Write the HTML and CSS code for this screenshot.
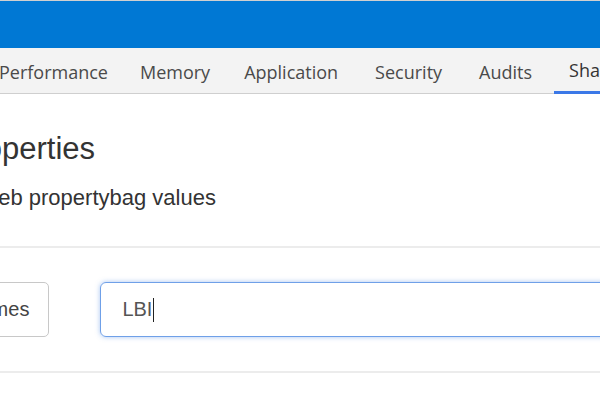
FILE: index.html
```html
<!DOCTYPE html>
<html>
<head>
<meta charset="utf-8">
<link rel="stylesheet" href="styles.css">
</head>
<body>
<div class="titlebar"></div>
<nav class="tabs">
  <div class="tab">Performance</div>
  <div class="tab">Memory</div>
  <div class="tab">Application</div>
  <div class="tab">Security</div>
  <div class="tab">Audits</div>
  <div class="tab active">SharePoint</div>
</nav>
<main class="content">
  <h1 class="title">Web Properties</h1>
  <p class="subtitle">Manage the web propertybag values</p>
  <hr class="divider">
  <div class="search-row">
    <button class="btn">Get all names</button>
    <div class="field"><span class="value">LBI</span><span class="caret"></span></div>
  </div>
  <hr class="divider">
</main>
</body>
</html>
```
FILE: styles.css
```css
html, body {
  margin: 0;
  padding: 0;
  background: #ffffff;
  overflow: hidden;
  width: 600px;
  height: 400px;
}
.titlebar {
  height: 48px;
  box-sizing: border-box;
  background: #0078d4;
  border-top: 1px solid #d0d0d0;
}
.tabs {
  display: flex;
  height: 46px;
  box-sizing: border-box;
  background: #f3f3f3;
  border-bottom: 1px solid #cfcfcf;
  margin-left: -18px;
  width: 700px;
  font-family: "Open Sans", sans-serif;
  font-size: 18px;
  color: #4a4a4a;
}
.tab {
  padding: 0 17px;
  display: flex;
  align-items: center;
  white-space: nowrap;
  box-sizing: border-box;
  height: 46px;
  padding-top: 1px;
}
.tab:nth-child(2) { margin-left: -2px; }
.tab:nth-child(4) { margin-left: 3px; }
.tab:nth-child(5) { margin-left: 3px; }
.tab.active {
  color: #333333;
  border-bottom: 3px solid #3b78e7;
  margin-left: 5px;
  margin-bottom: -1px;
  padding-left: 15px;
}
.content {
  margin-left: -118px;
  font-family: "Liberation Sans", Arial, sans-serif;
  color: #333333;
  width: 900px;
}
.title {
  margin: 37px 0 0 0;
  font-size: 31px;
  line-height: 36px;
  font-weight: normal;
}
.subtitle {
  margin: 17px 0 0 -22px;
  font-size: 22px;
  line-height: 28px;
}
.divider {
  margin: 34px 0 0 0;
  border: 0;
  height: 2px;
  background: #ececec;
}
.search-row {
  display: flex;
  align-items: center;
  gap: 51px;
  margin-top: 34px;
}
.search-row + .divider {
  margin-top: 34px;
}
.btn {
  height: 55px;
  box-sizing: border-box;
  padding: 0 19px 0 20px;
  margin-left: 3px;
  border: 1px solid #c8c8c8;
  border-radius: 5px;
  background: #ffffff;
  font-family: "Liberation Sans", Arial, sans-serif;
  font-size: 20px;
  color: #444444;
  white-space: nowrap;
}
.field {
  height: 55px;
  width: 700px;
  box-sizing: border-box;
  border: 1px solid #6fa0e8;
  border-radius: 6px;
  box-shadow: 0 0 5px rgba(80, 140, 230, 0.5);
  display: flex;
  align-items: center;
  padding-left: 21px;
  font-size: 20px;
  color: #555555;
}
.caret {
  display: inline-block;
  width: 1px;
  height: 24px;
  background: #222222;
  margin-left: 1px;
}
```
